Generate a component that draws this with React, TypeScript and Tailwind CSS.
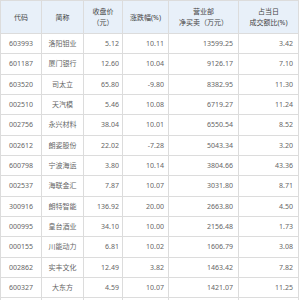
import React from "react";

// Daily top-list table: net buy by brokerage
const rows = [
  { code: "603993", name: "洛阳钼业", close: "5.12", pct: "10.11", net: "13599.25", ratio: "3.42" },
  { code: "601187", name: "厦门银行", close: "12.60", pct: "10.04", net: "9126.17", ratio: "7.10" },
  { code: "603520", name: "司太立", close: "65.80", pct: "-9.80", net: "8382.95", ratio: "11.30" },
  { code: "002510", name: "天汽模", close: "5.46", pct: "10.08", net: "6719.27", ratio: "11.24" },
  { code: "002756", name: "永兴材料", close: "38.04", pct: "10.01", net: "6550.54", ratio: "8.52" },
  { code: "002612", name: "朗姿股份", close: "22.02", pct: "-7.28", net: "5043.34", ratio: "3.20" },
  { code: "600798", name: "宁波海运", close: "3.80", pct: "10.14", net: "3804.66", ratio: "43.36" },
  { code: "002537", name: "海联金汇", close: "7.87", pct: "10.07", net: "3031.80", ratio: "8.71" },
  { code: "300916", name: "朗特智能", close: "136.92", pct: "20.00", net: "2663.80", ratio: "4.50" },
  { code: "000995", name: "皇台酒业", close: "34.10", pct: "10.00", net: "2156.48", ratio: "1.73" },
  { code: "000155", name: "川能动力", close: "6.81", pct: "10.02", net: "1606.79", ratio: "3.08" },
  { code: "002862", name: "实丰文化", close: "12.49", pct: "3.82", net: "1463.42", ratio: "7.82" },
  { code: "600327", name: "大东方", close: "4.59", pct: "10.07", net: "1421.07", ratio: "11.25" },
  { code: "", name: "", close: "", pct: "", net: "", ratio: "" },
];

const cols = "grid grid-cols-[41px_42px_39px_46px_70px_60px]";
const cell = "border-r border-b border-[#dcdcdc] flex items-center";

export default function App() {
  return (
    <div
      className="w-[300px] h-[300px] overflow-hidden bg-white text-[7px] leading-[11px] text-[#666]"
      style={{ fontFamily: '"Noto Sans", "Noto Sans CJK SC", sans-serif' }}
    >
      <div className="w-[299px] border-l border-t border-[#dcdcdc]">
        {/* header */}
        <div className={`${cols} h-[33px] bg-[#e8f0f9] text-[#444]`}>
          <div className={`${cell} justify-center`}>代码</div>
          <div className={`${cell} justify-center`}>简称</div>
          <div className={`${cell} justify-center flex-col text-center`}>
            <span>收盘价</span>
            <span>（元）</span>
          </div>
          <div className={`${cell} justify-center`}>涨跌幅(%)</div>
          <div className={`${cell} justify-center flex-col text-center`}>
            <span>营业部</span>
            <span>净买卖（万元）</span>
          </div>
          <div className={`${cell} justify-center flex-col text-center`}>
            <span>占当日</span>
            <span>成交额比(%)</span>
          </div>
        </div>

        {/* body */}
        {rows.map((r, i) => (
          <div key={i} className={`${cols} h-[20.33px]`}>
            <div className={`${cell} justify-center`}>{r.code}</div>
            <div className={`${cell} justify-center`}>{r.name}</div>
            <div className={`${cell} justify-end pr-[3px]`}>{r.close}</div>
            <div className={`${cell} justify-end pr-[4px]`}>{r.pct}</div>
            <div className={`${cell} justify-end pr-[5px]`}>{r.net}</div>
            <div className={`${cell} justify-end pr-[5px]`}>{r.ratio}</div>
          </div>
        ))}
      </div>
    </div>
  );
}
